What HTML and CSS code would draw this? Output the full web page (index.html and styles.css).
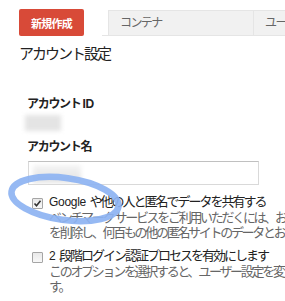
FILE: index.html
```html
<!DOCTYPE html>
<html lang="ja">
<head>
  <meta charset="UTF-8" />
  <meta name="viewport" content="width=device-width, initial-scale=1.0" />
  <title>アカウント設定</title>
  <link rel="stylesheet" href="styles.css">
</head>
<body>
  <div class="page">
    <div class="toolbar">
      <button class="btn-new">新規作成</button>
      <div class="tabs">
        <div class="tab">コンテナ</div>
        <div class="tab tab-next">ユー</div>
      </div>
    </div>

    <h1>アカウント設定</h1>

    <div class="fields">
      <div class="label">アカウント <span class="latin">ID</span></div>
      <div class="blurred"></div>

      <div class="label label-name">アカウント名</div>
      <div class="input"><div class="input-blur"></div></div>

      <div class="option">
        <span class="check checked">
          <svg width="9" height="9" viewBox="0 0 9 9"><path d="M1.5 4.5 L3.5 6.8 L7.5 1.8" fill="none" stroke="#333" stroke-width="1.6"/></svg>
        </span>
        <div class="option-text">
          <div class="option-title"><span class="latin">Google</span> や他の人と匿名でデータを共有する</div>
          <div class="option-desc">ベンチマーク サービスをご利用いただくには、お<br>を削除し、何百もの他の匿名サイトのデータとお</div>
        </div>
      </div>

      <div class="option option-2">
        <span class="check"></span>
        <div class="option-text">
          <div class="option-title"><span class="latin">2</span> 段階ログイン認証プロセスを有効にします</div>
          <div class="option-desc">このオプションを選択すると、ユーザー設定を変<br>す。</div>
        </div>
      </div>
    </div>

    <!-- highlight drawn over the screenshot -->
    <svg class="highlight" width="130" height="60" viewBox="0 0 130 60">
      <ellipse cx="65" cy="29" rx="54" ry="21" transform="rotate(8 65 29)" fill="none" stroke="#8db3f2" stroke-width="6.5" opacity="0.92"/>
    </svg>
  </div>
</body>
</html>
```

FILE: styles.css
```css
body {
  margin: 0;
  overflow: hidden;
  background: #fff;
  font-family: "Liberation Sans", "Noto Sans CJK JP", sans-serif;
  color: #222;
}
.page {
  position: relative;
  padding-left: 19px;
  overflow: hidden;
}
.latin {
  letter-spacing: -0.2px;
}
.toolbar {
  display: flex;
  padding-top: 9px;
}
.btn-new {
  flex: none;
  width: 65px;
  height: 27px;
  padding: 0;
  border: none;
  border-radius: 2px;
  background: #d84a38;
  color: #fff;
  font-family: "Noto Sans CJK JP", sans-serif;
  font-weight: bold;
  font-size: 11px;
  letter-spacing: -0.7px;
}
.tabs {
  flex: 1;
  min-width: 0;
  display: flex;
  margin-left: 18px;
  padding-left: 6px;
  padding-top: 1px;
  border-bottom: 1px solid #e5e5e5;
  white-space: nowrap;
  overflow: hidden;
}
.tab {
  flex: none;
  width: 146px;
  height: 25px;
  line-height: 25px;
  padding-left: 11px;
  box-sizing: border-box;
  background: #f1f1f1;
  border: 1px solid #e5e5e5;
  border-bottom: none;
  color: #666;
  font-size: 12px;
  letter-spacing: -1.6px;
}
.tab-next {
  width: 40px;
  border-left: none;
}
h1 {
  margin: 8px 0 0;
  font-size: 15px;
  line-height: 20px;
  font-weight: normal;
  letter-spacing: -2px;
  color: #222;
}
.fields {
  padding-left: 8px;
}
.label {
  margin-top: 32px;
  font-size: 12px;
  line-height: 16px;
  font-weight: bold;
  letter-spacing: -1.3px;
}
.label .latin {
  letter-spacing: -0.5px;
}
.label-name {
  margin-top: 8px;
}
.blurred {
  width: 36px;
  height: 16px;
  margin: 3px 0 0 -2px;
  background: #e4e4e4;
  filter: blur(2px);
}
.input {
  width: 231px;
  height: 24px;
  margin: 6px 0 0 1px;
  box-sizing: border-box;
  border: 1px solid #d9d9d9;
  border-top-color: #c0c0c0;
  overflow: hidden;
}
.input-blur {
  width: 48px;
  height: 18px;
  margin: 3px 0 0 4px;
  background: linear-gradient(#f4f4f4, #e2e2e2);
  filter: blur(2px);
}
.option {
  display: flex;
  margin-top: 9px;
  white-space: nowrap;
}
.option-2 {
  margin-top: 8px;
}
.check {
  flex: none;
  width: 9px;
  height: 9px;
  margin: 4px 6px 0 5px;
  border: 1px solid #a5a5a5;
  border-radius: 1px;
  background: linear-gradient(#e9e9e9, #f8f8f8);
  display: flex;
  align-items: center;
  justify-content: center;
}
.check svg {
  display: block;
}
.option-title {
  font-size: 13px;
  line-height: 15px;
  letter-spacing: -2px;
  color: #222;
}
.option-title .latin {
  font-size: 12px;
  letter-spacing: -0.3px;
  margin-right: 2px;
}
.option-desc {
  font-size: 13px;
  line-height: 15px;
  letter-spacing: -2.3px;
  color: #666;
}
.highlight {
  position: absolute;
  left: 0;
  top: 170px;
}
```
